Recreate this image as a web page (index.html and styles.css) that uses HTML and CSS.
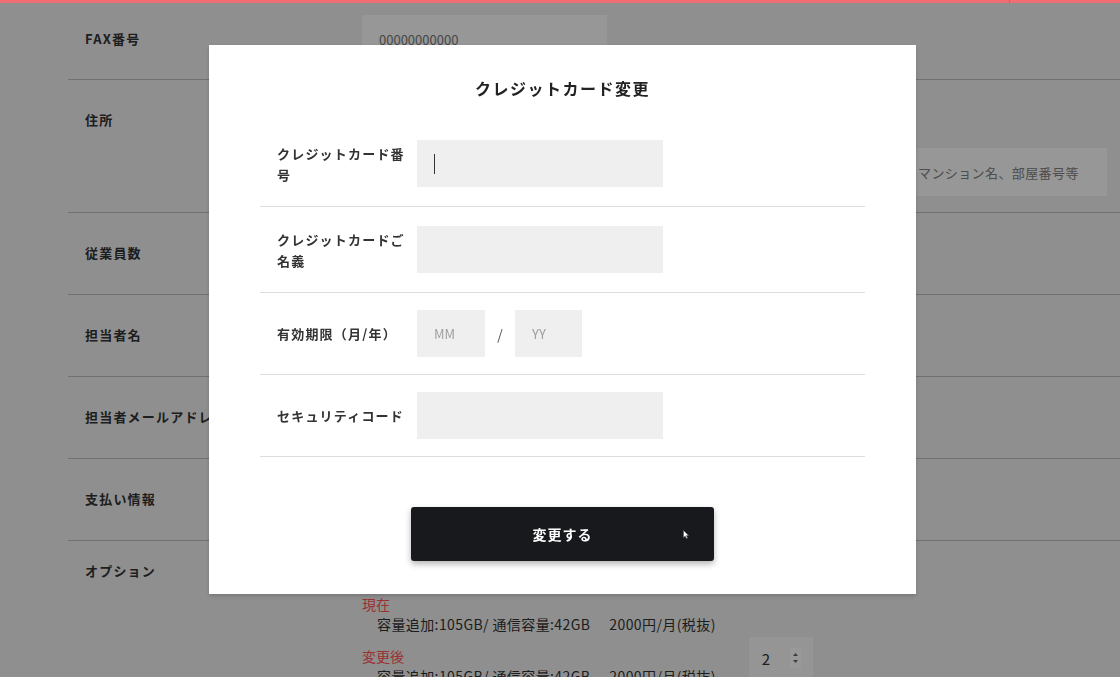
FILE: index.html
```html
<!DOCTYPE html>
<html lang="ja">
<head>
<meta charset="utf-8">
<title>クレジットカード変更</title>
<link rel="stylesheet" href="styles.css">
</head>
<body>
<header class="topbar"><span class="topbar-tick"></span></header>

<main class="page">
  <div class="prow prow-first">
    <div class="plabel">FAX番号</div>
    <div class="pvalue"><div class="pinput pinput-std">00000000000</div></div>
  </div>

  <div class="prow prow-address">
    <div class="plabel plabel-tall">住所</div>
    <div class="pvalue pstack">
      <div class="pline"><div class="pinput pinput-std">1000001</div></div>
      <div class="pline">
        <div class="pinput pinput-grow">千代田区千代田1-1</div>
        <div class="pinput pinput-bldg placeholder">マンション名、部屋番号等</div>
      </div>
    </div>
  </div>

  <div class="prow prow-std">
    <div class="plabel">従業員数</div>
    <div class="pvalue"><div class="pinput pinput-std">10</div></div>
  </div>

  <div class="prow prow-std">
    <div class="plabel">担当者名</div>
    <div class="pvalue"><div class="pinput pinput-std">山田 太郎</div></div>
  </div>

  <div class="prow prow-std">
    <div class="plabel">担当者メールアドレス</div>
    <div class="pvalue"><div class="pinput pinput-std">info@example.com</div></div>
  </div>

  <div class="prow prow-std">
    <div class="plabel">支払い情報</div>
    <div class="pvalue"><div class="pinput pinput-std">クレジットカード</div></div>
  </div>

  <div class="prow prow-option">
    <div class="plabel plabel-option">オプション</div>
    <div class="pvalue option-body">
      <div class="option-group">
        <p class="option-title">現在</p>
        <p class="option-detail"><span>容量追加:105GB/ 通信容量:42GB</span><span>2000円/月(税抜)</span></p>
      </div>
      <div class="option-group option-group-change">
        <div class="option-text">
          <p class="option-title">変更後</p>
          <p class="option-detail"><span>容量追加:105GB/ 通信容量:42GB</span><span>2000円/月(税抜)</span></p>
        </div>
        <div class="num-input">
          <span class="num-value">2</span>
          <span class="spinner">
            <svg width="11" height="20" viewBox="0 0 11 20"><path d="M3 8 L5.5 5 L8 8 Z" fill="#666"/><path d="M3 12 L5.5 15 L8 12 Z" fill="#666"/></svg>
          </span>
        </div>
      </div>
    </div>
  </div>
</main>

<div class="overlay">
  <section class="modal">
    <h2 class="modal-title">クレジットカード変更</h2>
    <div class="form">
      <div class="frow">
        <div class="flabel">クレジットカード番号</div>
        <div class="field"><span class="caret"></span></div>
      </div>
      <div class="frow">
        <div class="flabel">クレジットカードご名義</div>
        <div class="field"></div>
      </div>
      <div class="frow">
        <div class="flabel">有効期限（月/年）</div>
        <div class="field field-mm">MM</div>
        <span class="slash">/</span>
        <div class="field field-yy">YY</div>
      </div>
      <div class="frow">
        <div class="flabel">セキュリティコード</div>
        <div class="field"></div>
      </div>
    </div>
    <button class="submit" type="button">変更する<svg class="pointer" width="6" height="9" viewBox="0 0 6 9"><path d="M0.5 0.5 L0.5 7.5 L2.2 6 L3.4 8.6 L4.5 8.1 L3.4 5.6 L5.6 5.6 Z" fill="#fff" stroke="#555" stroke-width="0.5"/></svg></button>
  </section>
</div>
</body>
</html>
```

FILE: styles.css
```css
html, body {
  margin: 0;
  padding: 0;
  overflow: hidden;
}

body {
  background: #efefef;
  font-family: "Noto Sans CJK JP", "Noto Sans", sans-serif;
  color: #333;
  width: 1120px;
  height: 677px;
}

p { margin: 0; }

.topbar {
  position: fixed;
  top: 0;
  left: 0;
  width: 1120px;
  height: 3px;
  background: #ef6e76;
  z-index: 20;
}

.topbar-tick {
  position: absolute;
  left: 1009px;
  top: 0;
  width: 1px;
  height: 3px;
  background: #c4636a;
}

/* underlying page */
.page {
  margin-left: 68px;
  width: 1070px;
}

.prow {
  display: flex;
  border-bottom: 1px solid #bcbcbc;
}

.prow-first {
  padding: 15px 0 16px;
  align-items: center;
}

.prow-address {
  padding: 16px 0;
  align-items: flex-start;
}

.prow-std {
  padding: 16px 0 17px;
  align-items: center;
}

.prow-option {
  padding-top: 20px;
  align-items: flex-start;
  border-bottom: none;
}

.plabel {
  flex: 0 0 294px;
  box-sizing: border-box;
  padding-left: 17px;
  font-size: 13px;
  font-weight: bold;
  letter-spacing: 1.2px;
  line-height: 20px;
  color: #333;
  white-space: nowrap;
}

.plabel-tall { line-height: 48px; }

.pvalue {
  width: 745px;
}

.pstack {
  display: flex;
  flex-direction: column;
  gap: 4px;
}

.pline {
  display: flex;
  gap: 16px;
}

.pinput {
  height: 48px;
  box-sizing: border-box;
  background: #fcfcfc;
  padding-left: 17px;
  display: flex;
  align-items: center;
  font-size: 13px;
  color: #777;
  white-space: nowrap;
  overflow: hidden;
}

.pinput-std { width: 245px; }
.pinput-grow { flex: 1; }
.pinput-bldg { width: 206px; letter-spacing: 0.4px; }
.placeholder { color: #808080; }

.option-body {
  padding-top: 33px;
}

.option-title {
  font-size: 14px;
  line-height: 20px;
  color: #ff5252;
}

.option-detail {
  display: flex;
  gap: 19px;
  padding-left: 15px;
  font-size: 14px;
  line-height: 21px;
  letter-spacing: 0.4px;
  color: #333;
  white-space: nowrap;
}

.option-group-change {
  display: flex;
  align-items: flex-start;
  gap: 33px;
  margin-top: 2px;
}

.option-text { padding-top: 9px; }

.num-input {
  width: 64px;
  height: 42px;
  box-sizing: border-box;
  background: #f8f8f8;
  display: flex;
  align-items: center;
  justify-content: space-between;
  padding: 0 12px 0 13px;
}

.num-value {
  font-size: 15px;
  color: #333;
}

.spinner {
  width: 11px;
  height: 20px;
  background: #ffffff;
  display: flex;
}

/* modal */
.overlay {
  position: fixed;
  inset: 0;
  background: rgba(0, 0, 0, 0.4);
  z-index: 10;
}

.modal {
  width: 707px;
  box-sizing: border-box;
  margin: 45px 0 0 209px;
  background: #fff;
  padding: 32px 51px 33px;
  box-shadow: 0 2px 4px rgba(0, 0, 0, 0.18);
}

.modal-title {
  margin: 0;
  text-align: center;
  font-size: 16px;
  font-weight: bold;
  line-height: 22px;
  letter-spacing: 1.5px;
  color: #222;
}

.form {
  margin-top: 22px;
}

.frow {
  display: flex;
  align-items: center;
  padding: 17px 0;
  border-bottom: 1px solid #dddddd;
}

.flabel {
  flex: 0 0 157px;
  box-sizing: border-box;
  padding: 4.5px 10px 4.5px 17px;
  font-size: 13px;
  font-weight: bold;
  line-height: 21px;
  letter-spacing: 1.2px;
  color: #333;
}

.field {
  width: 246px;
  height: 47px;
  box-sizing: border-box;
  background: #efefef;
  padding-left: 17px;
  display: flex;
  align-items: center;
  font-size: 13px;
  color: #a0a0a0;
}

.field-mm { width: 68px; }
.field-yy { width: 67px; }

.slash {
  width: 30px;
  text-align: center;
  font-size: 14px;
  color: #555;
}

.caret {
  width: 1px;
  height: 20px;
  background: #333;
}

.submit {
  position: relative;
  display: block;
  width: 303px;
  height: 54px;
  margin: 50px auto 0;
  border: none;
  border-radius: 3px;
  background: #17191d;
  color: #fff;
  font-family: "Noto Sans CJK JP", "Noto Sans", sans-serif;
  font-size: 14px;
  font-weight: bold;
  letter-spacing: 1px;
  box-shadow: 0 3px 6px rgba(0, 0, 0, 0.3);
}

.pointer {
  position: absolute;
  left: 272px;
  top: 23px;
}
```
